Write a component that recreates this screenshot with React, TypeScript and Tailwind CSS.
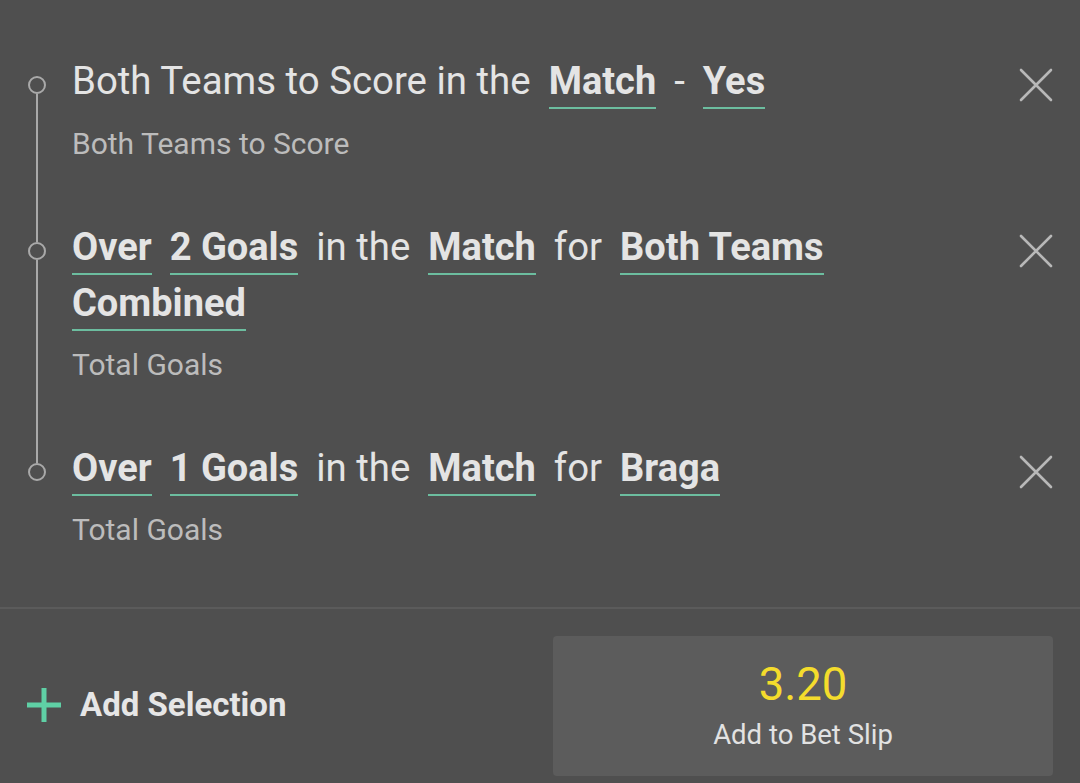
import React from "react";

type Tok = { t: string; b?: boolean };

const rows: { tokens: Tok[]; sub: string }[] = [
  {
    tokens: [
      { t: "Both Teams to Score in the" },
      { t: "Match", b: true },
      { t: "-" },
      { t: "Yes", b: true },
    ],
    sub: "Both Teams to Score",
  },
  {
    tokens: [
      { t: "Over", b: true },
      { t: "2 Goals", b: true },
      { t: "in the" },
      { t: "Match", b: true },
      { t: "for" },
      { t: "Both Teams", b: true },
      { t: "Combined", b: true },
    ],
    sub: "Total Goals",
  },
  {
    tokens: [
      { t: "Over", b: true },
      { t: "1 Goals", b: true },
      { t: "in the" },
      { t: "Match", b: true },
      { t: "for" },
      { t: "Braga", b: true },
    ],
    sub: "Total Goals",
  },
];

function XIcon() {
  return (
    <svg width="34" height="34" viewBox="0 0 34 34" fill="none">
      <path d="M2 2L32 32M32 2L2 32" stroke="#b8b8b8" strokeWidth="2.6" strokeLinecap="round" />
    </svg>
  );
}

export default function App() {
  return (
    <div
      className="w-[1080px] h-[783px] overflow-hidden bg-[#4f4f4f] flex flex-col"
      style={{ fontFamily: "Roboto, 'Liberation Sans', sans-serif" }}
    >
      <div className="flex flex-col">
        {rows.map((row, i) => {
          const first = i === 0;
          const last = i === rows.length - 1;
          const pt = first ? "pt-[61px]" : "pt-[34px]";
          const pb = last ? "pb-[59px]" : "pb-[31px]";
          const topSeg = first ? "h-[76px]" : "h-[49px]";
          const xMt = first ? "mt-[68px]" : "mt-[41px]";
          const subMt = first ? "mt-[17px]" : "mt-[16px]";
          return (
            <div key={i} className="flex">
              <div className="w-[72px] shrink-0 flex flex-col">
                <div className={`${topSeg} w-[2px] ml-[36px] ${first ? "" : "bg-[#a9a9a9]"}`} />
                <div className="w-[18px] h-[18px] ml-[28px] rounded-full border-2 border-[#a9a9a9]" />
                <div className={`flex-1 w-[2px] ml-[36px] ${last ? "" : "bg-[#a9a9a9]"}`} />
              </div>
              <div className={`flex-1 ${pt} ${pb}`}>
                <div className="flex flex-wrap gap-x-[18px] gap-y-[8px]">
                  {row.tokens.map((tk, j) =>
                    tk.b ? (
                      <div
                        key={j}
                        className="text-[38px] leading-[40px] font-bold text-[#e4e4e4] pb-[6px] border-b-2 border-[#6cbd9f] whitespace-nowrap"
                      >
                        {tk.t}
                      </div>
                    ) : (
                      <div
                        key={j}
                        className="text-[38.4px] leading-[40px] text-[#e4e4e4] pb-[8px] whitespace-nowrap"
                      >
                        {tk.t}
                      </div>
                    )
                  )}
                </div>
                <div className={`${subMt} text-[30px] leading-[36px] text-[#bcbcbc]`}>{row.sub}</div>
              </div>
              <div className="w-[88px] shrink-0 flex justify-center items-start">
                <div className={xMt}>
                  <XIcon />
                </div>
              </div>
            </div>
          );
        })}
      </div>
      <div className="h-[2px] bg-[#5b5b5b]" />
      <div className="flex items-start pt-[27px] pl-[27px] pr-[27px]">
        <div className="flex-1 h-[138px] flex items-center">
          <svg width="34" height="34" viewBox="0 0 34 34">
            <rect x="14.5" y="0" width="5" height="34" fill="#5fd0a5" />
            <rect x="0" y="14.5" width="34" height="5" fill="#5fd0a5" />
          </svg>
          <span className="ml-[19px] text-[33px] font-bold text-[#e6e6e6]">Add Selection</span>
        </div>
        <div className="w-[500px] h-[140px] rounded-[4px] bg-[#5c5c5c] flex flex-col items-center pt-[25px]">
          <div className="text-[45.5px] leading-[48px] text-[#f4dc2c]">3.20</div>
          <div className="mt-[10px] text-[27.5px] leading-[32px] text-[#e2e2e2]">Add to Bet Slip</div>
        </div>
      </div>
    </div>
  );
}
